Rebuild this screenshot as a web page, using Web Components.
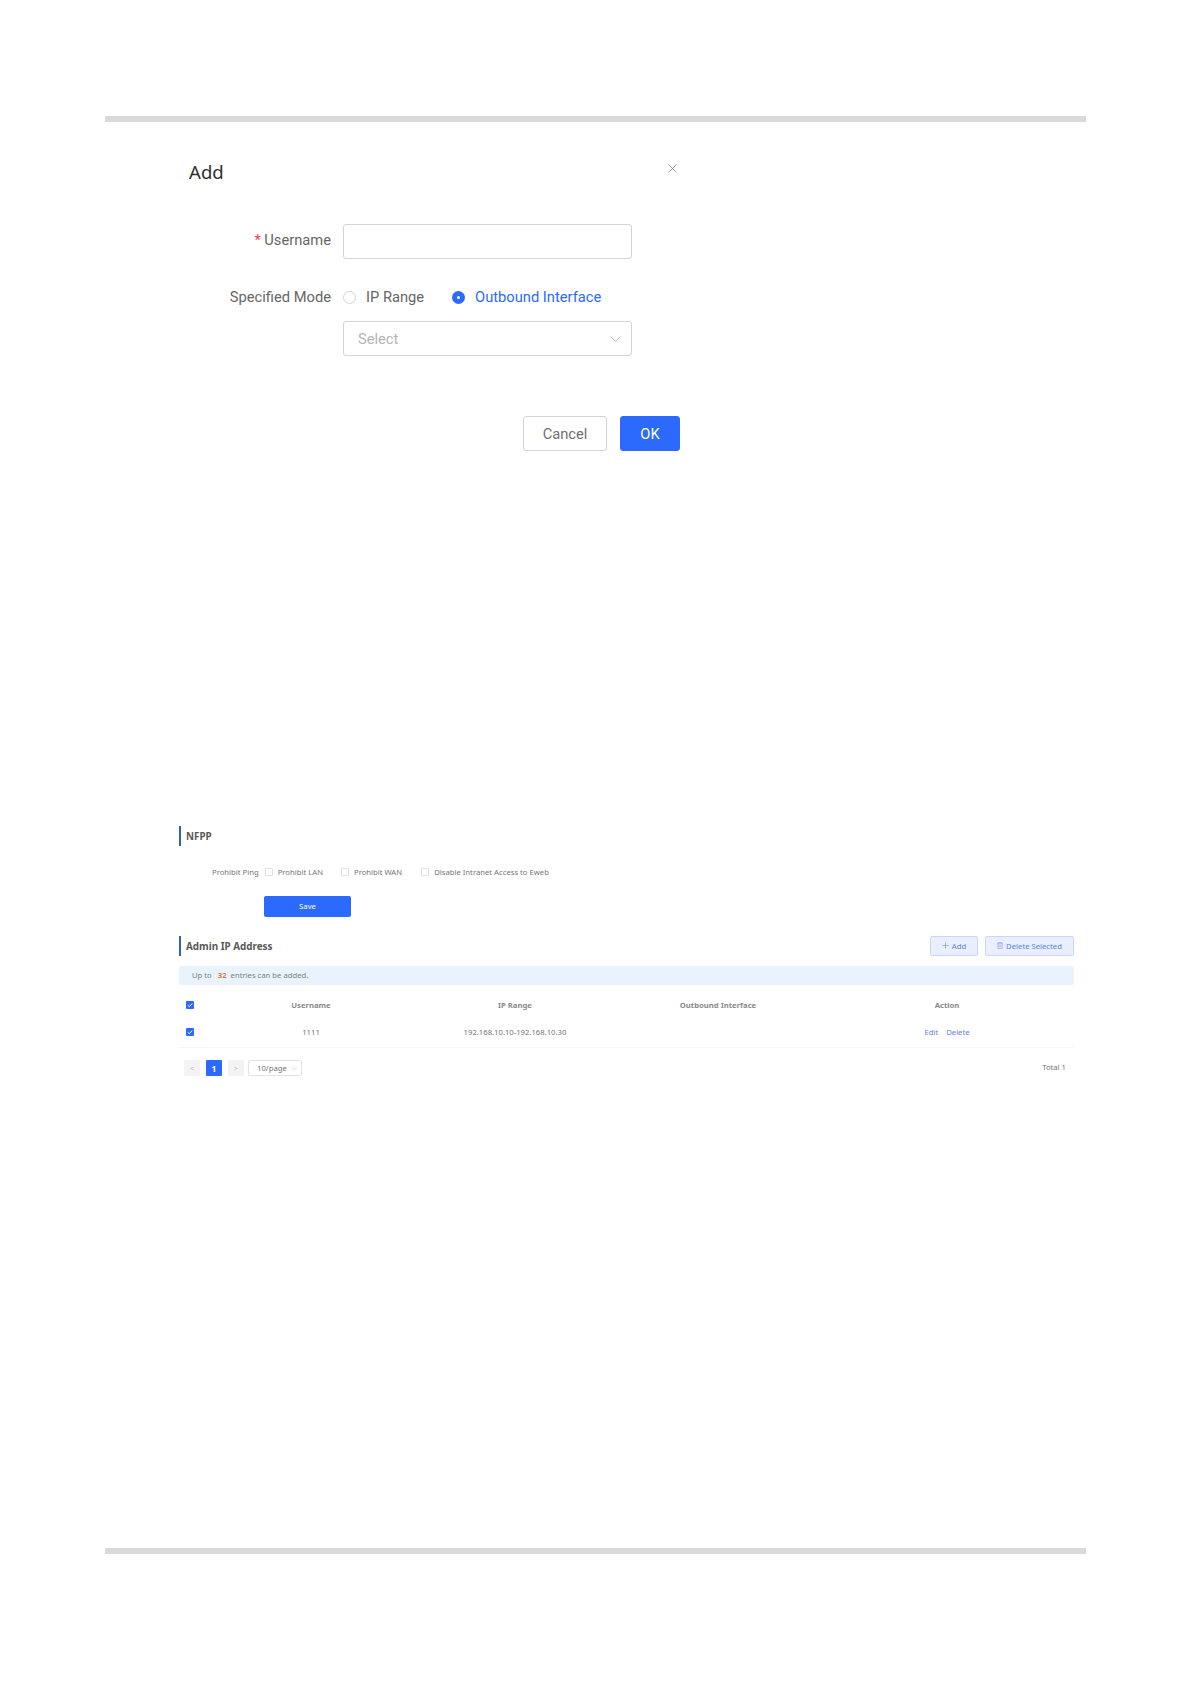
<!DOCTYPE html>
<html>
<head>
<meta charset="utf-8">
<title>Add</title>
<style>
  html, body { margin: 0; background: #fff; }
  body { font-family: "Noto Sans", "Open Sans", sans-serif; }
</style>
</head>
<body>
<doc-page>
  <add-dialog></add-dialog>
  <nfpp-panel></nfpp-panel>
  <admin-panel></admin-panel>
</doc-page>

<script>
// Base class so every element just declares its own template string
class ShadowEl extends HTMLElement {
  constructor() {
    super()
    this.attachShadow({ mode: 'open' })
    this.shadowRoot.innerHTML = this.template()
  }
}

class DocPage extends ShadowEl {
  template() {
    return `
      <style>
        :host { display: block; width: 1191px; height: 1684px; box-sizing: border-box; padding: 116px 105px 0; }
        .wrap { display: flex; flex-direction: column; height: 1437.5px; }
        .rule { height: 5.5px; background: #d9d9d9; flex: none; }
        .body { flex: 1; }
      </style>
      <div class="wrap">
        <div class="rule"></div>
        <div class="body"><slot></slot></div>
        <div class="rule"></div>
      </div>
    `
  }
}

class UiRadio extends ShadowEl {
  template() {
    return `
      <style>
        :host { display: inline-flex; align-items: center; gap: 10px; color: #666; }
        :host([checked]) { color: #2b6afd; }
        i { width: 13px; height: 13px; box-sizing: border-box; border-radius: 50%; border: 1px solid #d4d4d4; background: #fff; flex: none; }
        :host([checked]) i { border: 5px solid #2b6afd; }
      </style>
      <i></i><slot></slot>
    `
  }
}

class UiCheck extends ShadowEl {
  template() {
    return `
      <style>
        :host { display: inline-flex; align-items: center; gap: 5px; color: #757575; }
        i { width: 8px; height: 8px; box-sizing: border-box; border: 1px solid #e3e3e3; border-radius: 1px; background: #fff; flex: none; display: flex; }
        :host([checked]) i { border: 0; background: #2b6afd; }
        svg { display: none; width: 8px; height: 8px; }
        :host([checked]) svg { display: block; }
      </style>
      <i><svg viewBox="0 0 8 8" fill="none" stroke="#fff" stroke-width="1"><path d="M1.7 4.2 3.3 5.7 6.3 2.5"/></svg></i><slot></slot>
    `
  }
}

class AddDialog extends ShadowEl {
  template() {
    return `
      <style>
        :host { display: block; width: 491px; margin-left: 84px; font-family: Roboto, "Noto Sans", sans-serif; font-size: 14.7px; color: #666; }
        .head { display: flex; justify-content: space-between; padding-top: 33.5px; height: 69px; }
        h2 { margin: 0; font-family: "Noto Sans", sans-serif; font-weight: 400; font-size: 18.6px; line-height: 34px; color: #303030; }
        .close { width: 9px; height: 9px; margin: 8.5px 3px 0 0; }
        .row { display: grid; grid-template-columns: 142px 289px; column-gap: 12px; align-items: center; }
        .row label { text-align: right; }
        .user label { padding-bottom: 3px; }
        .req { color: #e5484d; }
        .field { height: 35px; box-sizing: border-box; border: 1px solid #d4d4d4; border-radius: 3px; background: #fff; }
        .radios { display: flex; gap: 28px; height: 24px; align-items: center; }
        .mode { margin-top: 26px; }
        .sel { margin-top: 12px; display: flex; align-items: center; justify-content: space-between; padding: 0 10px 0 14px; color: #b5b5b5; }
        .foot { display: flex; justify-content: flex-end; gap: 13px; margin-top: 60px; }
        button { font: inherit; height: 35px; border-radius: 3px; padding: 0; }
        .cancel { width: 84px; background: #fff; border: 1px solid #d4d4d4; color: #707070; }
        .ok { width: 60px; background: #2b6afd; border: 1px solid #2b6afd; color: #fff; }
      </style>
      <div class="head">
        <h2>Add</h2>
        <svg class="close" viewBox="0 0 9 9" fill="none" stroke="#8c8c8c" stroke-width="0.8"><path d="M0.4 0.4 8.6 8.6M8.6 0.4 0.4 8.6"/></svg>
      </div>
      <div class="row user">
        <label><span class="req">*</span> Username</label>
        <div class="field"></div>
      </div>
      <div class="row mode">
        <label>Specified Mode</label>
        <div class="radios">
          <ui-radio>IP Range</ui-radio>
          <ui-radio checked>Outbound Interface</ui-radio>
        </div>
      </div>
      <div class="row">
        <span></span>
        <div class="field sel">
          <span>Select</span>
          <svg width="11" height="6" viewBox="0 0 11 6" fill="none" stroke="#b5b5b5" stroke-width="0.9"><path d="M0.5 0.5 5.5 5.4 10.5 0.5"/></svg>
        </div>
      </div>
      <div class="foot">
        <button class="cancel">Cancel</button>
        <button class="ok">OK</button>
      </div>
    `
  }
}

class SectionTitle extends ShadowEl {
  template() {
    return `
      <style>
        :host { display: block; height: 20px; box-sizing: border-box; border-left: 2px solid #2e62c2; padding-left: 5px; font-size: 9.9px; font-weight: 700; line-height: 20px; color: #595959; }
      </style>
      <slot></slot>
    `
  }
}

class NfppPanel extends ShadowEl {
  template() {
    return `
      <style>
        :host { display: block; margin: 375px 12px 0 74px; font-size: 7.7px; color: #757575; }
        .opts { display: flex; align-items: center; margin: 19px 0 0 33px; height: 14px; }
        .lbl { margin-right: 6px; }
        ui-check { margin-right: 18px; }
        ui-check.wan { margin-right: 19px; }
        .save { display: block; margin: 17px 0 0 85px; width: 87px; height: 21px; border: 0; border-radius: 2px; padding: 0 0 2px; background: #2b6afd; color: #fff; font: inherit; }
      </style>
      <section-title>NFPP</section-title>
      <div class="opts">
        <span class="lbl">Prohibit Ping</span>
        <ui-check>Prohibit LAN</ui-check>
        <ui-check class="wan">Prohibit WAN</ui-check>
        <ui-check>Disable Intranet Access to Eweb</ui-check>
      </div>
      <button class="save">Save</button>
    `
  }
}

class AdminPanel extends ShadowEl {
  template() {
    return `
      <style>
        :host { display: block; margin: 19px 12px 0 74px; font-size: 7.7px; color: #757575; }
        .top { display: flex; justify-content: space-between; }
        section-title { flex: 1; }
        .acts { display: flex; gap: 7px; }
        .act { display: flex; align-items: center; justify-content: center; gap: 3px; height: 20px; box-sizing: border-box; border: 1px solid #c9d6fb; border-radius: 2px; background: #e9effe; color: #5f80ea; padding-bottom: 1px; }
        .add { width: 48px; }
        .del { width: 89px; }
        .alert { margin-top: 10px; height: 19px; padding: 0 0 2px 13px; box-sizing: border-box; display: flex; align-items: center; background: #e8f3fe; border-radius: 2px; color: #7f7f7f; }
        .alert b { color: #e2793f; margin: 0 4px 0 6px; }
        .grid { display: grid; grid-template-columns: 15px 234px 174px 232px 226px 14px; }
        .grid > * { display: flex; align-items: center; justify-content: center; }
        .grid > .c { justify-content: flex-start; padding-left: 7px; }
        .h { height: 27px; margin-top: 6px; font-weight: 700; color: #8a8a8a; grid-row: 1; }
        .d { height: 30px; padding-bottom: 2px; box-sizing: border-box; border-bottom: 1px solid #f5f5f5; grid-row: 2; }
        .links { gap: 8px; color: #5f80ea; }
        .pager { display: flex; align-items: center; padding: 12px 8px 0 5px; height: 16px; }
        .pg { width: 16px; height: 16px; border-radius: 1px; background: #f4f4f4; color: #c4c4c4; display: flex; align-items: center; justify-content: center; margin-right: 6px; font-size: 7px; }
        .pg.on { background: #2b6afd; color: #fff; font-size: 8.4px; font-weight: 700; }
        .size { margin-left: -2px; width: 54px; height: 16px; box-sizing: border-box; border: 1px solid #e3e3e3; border-radius: 2px; display: flex; align-items: center; justify-content: space-between; padding: 0 4px 0 8px; }
        .total { margin-left: auto; padding-bottom: 2px; }
      </style>
      <div class="top">
        <section-title>Admin IP Address</section-title>
        <div class="acts">
          <div class="act add">
            <svg width="7" height="7" viewBox="0 0 7 7" fill="none" stroke="#7f98ec" stroke-width="0.7"><path d="M3.5 0.3V6.7M0.3 3.5H6.7"/></svg>
            <span>Add</span>
          </div>
          <div class="act del">
            <svg width="6" height="7" viewBox="0 0 6 7" fill="none" stroke="#7f98ec" stroke-width="0.6"><path d="M0 1.2H6M2 1.2V0.3H4V1.2M0.9 1.2V6.7H5.1V1.2M2.2 2.6V5.4M3.8 2.6V5.4"/></svg>
            <span>Delete Selected</span>
          </div>
        </div>
      </div>
      <div class="alert">Up to<b>32</b>entries can be added.</div>
      <div class="grid">
        <div class="h c"><ui-check checked></ui-check></div>
        <div class="h">Username</div>
        <div class="h">IP Range</div>
        <div class="h">Outbound Interface</div>
        <div class="h">Action</div>
        <div class="h"></div>
        <div class="d c"><ui-check checked></ui-check></div>
        <div class="d">1111</div>
        <div class="d">192.168.10.10-192.168.10.30</div>
        <div class="d"></div>
        <div class="d links"><span>Edit</span><span>Delete</span></div>
        <div class="d"></div>
      </div>
      <div class="pager">
        <div class="pg">&lt;</div>
        <div class="pg on">1</div>
        <div class="pg">&gt;</div>
        <div class="size">
          <span>10/page</span>
          <svg width="5" height="3" viewBox="0 0 5 3" fill="none" stroke="#bdbdbd" stroke-width="0.6"><path d="M0.3 0.3 2.5 2.6 4.7 0.3"/></svg>
        </div>
        <span class="total">Total 1</span>
      </div>
    `
  }
}

customElements.define('doc-page', DocPage)
customElements.define('ui-radio', UiRadio)
customElements.define('ui-check', UiCheck)
customElements.define('section-title', SectionTitle)
customElements.define('add-dialog', AddDialog)
customElements.define('nfpp-panel', NfppPanel)
customElements.define('admin-panel', AdminPanel)
</script>
</body>
</html>
